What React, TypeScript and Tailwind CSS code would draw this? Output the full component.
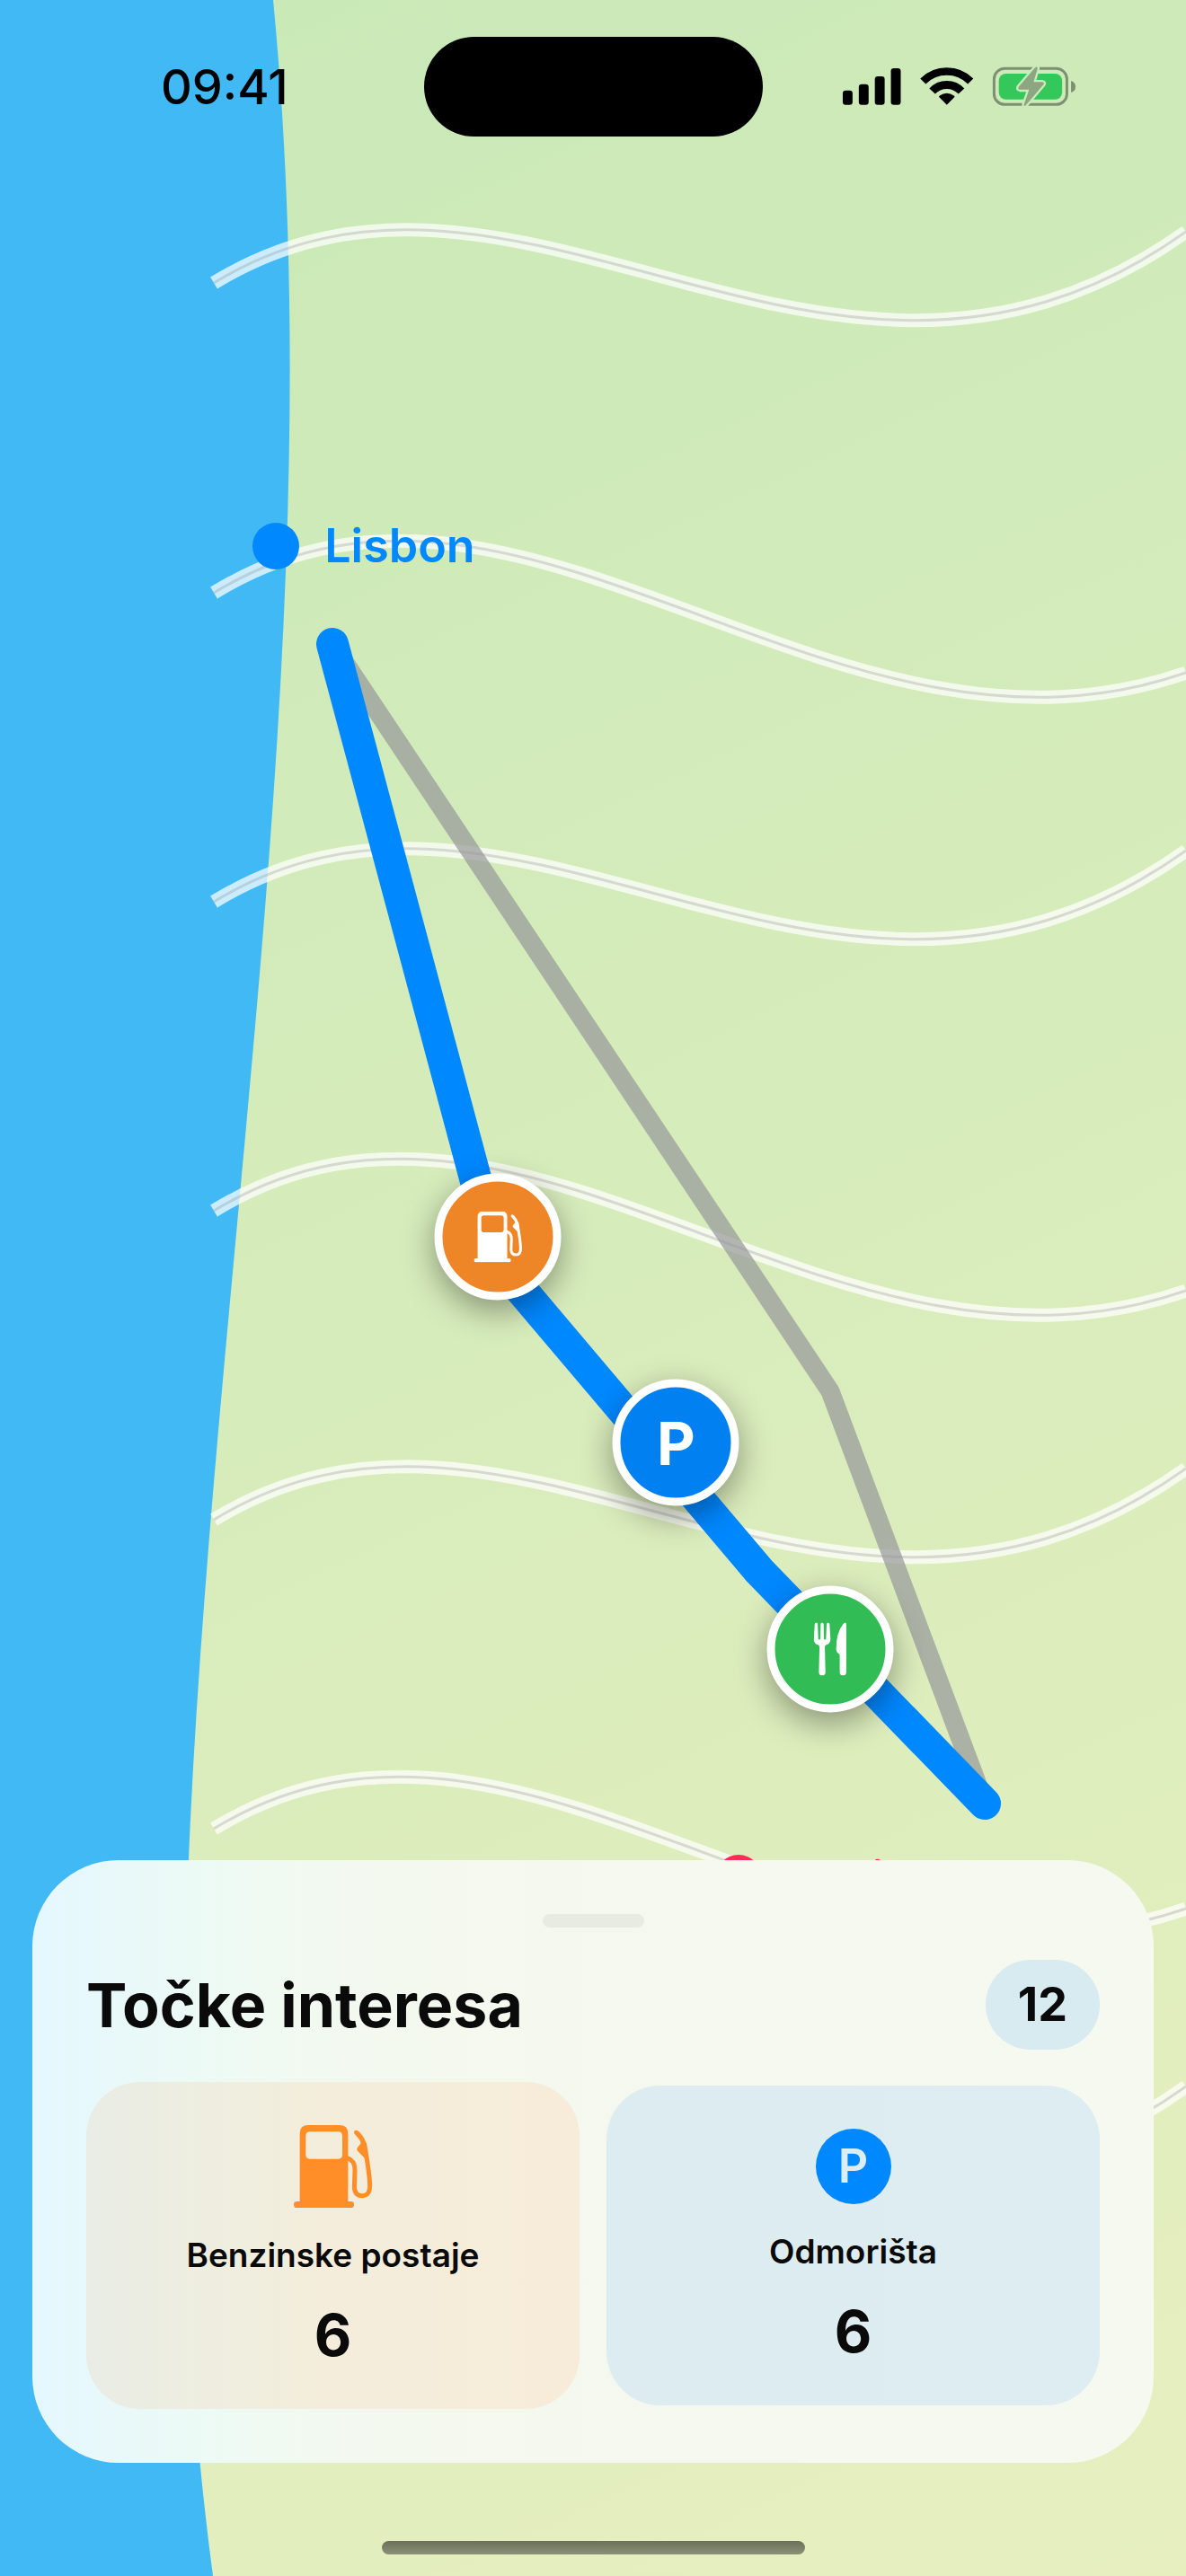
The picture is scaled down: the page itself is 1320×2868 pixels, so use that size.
import type { ReactNode } from "react";

interface Category {
  id: string;
  label: string;
  count: number;
  tint: string;
  icon: ReactNode;
}

interface CityLabelProps {
  name: string;
  position: string;
  dotColor: string;
  textColor: string;
}

interface MapPinProps {
  label: string;
  position: string;
  color: string;
  children: ReactNode;
}

const FuelIcon = ({ className }: { className: string }) => (
  <svg viewBox="27 48 264 276" className={className} aria-hidden="true">
    <path
      fill="currentColor"
      fillRule="evenodd"
      d="M75 48H180Q208 48 208 76V304H47V76Q47 48 75 48ZM81 70Q67 70 67 84V147Q67 161 81 161H175Q189 161 189 147V84Q189 70 175 70Z"
    />
    <rect x="27" y="303" width="201" height="21" rx="10" fill="currentColor" />
    <path
      fill="none"
      stroke="currentColor"
      strokeWidth="15"
      strokeLinecap="round"
      d="M206 158Q231 166 231 198L229 256Q231 284 256 284Q282 284 281 246Q279 205 263 112"
    />
    <path
      fill="currentColor"
      d="M228 75Q227 66 235 65Q240 65 245 70Q264 90 268 108L276 163H268L240 134Q235 128 240 122L251 109Q250 102 245 95Z"
    />
  </svg>
);

const CutleryIcon = ({ className }: { className: string }) => (
  <svg viewBox="0 0 110 178" className={className} fill="currentColor" aria-hidden="true">
    <path d="M3 5Q3 0 8 0Q13 0 13 5L15 54Q15 57 18 57Q22 57 22 54L23 5Q23 0 28 0Q33 0 33 5L34 54Q34 57 38 57Q41 57 41 54L43 5Q43 0 48 0Q53 0 53 5L56 56Q56 71 42 75Q37 77 37 82L39 167Q39 178 28 178Q17 178 17 167L19 82Q19 77 14 75Q0 71 0 56Z" />
    <path d="M109 4V167Q109 178 98 178Q87 178 87 167V110Q87 105 82 103Q75 99 75 90Q75 32 100 3Q107 -3 109 4Z" />
  </svg>
);

const StatusIcons = () => (
  <svg viewBox="21 42 786 136" className="h-[45px] w-[264px]" aria-label="Signal, Wi-Fi, baterija">
    <rect x="21" y="123" width="33" height="48" rx="10" />
    <rect x="75" y="102" width="33" height="69" rx="10" />
    <rect x="129" y="75" width="33" height="96" rx="10" />
    <rect x="183" y="48" width="33" height="123" rx="10" />

    <path d="M291 92A113 113 0 0 1 451 92" fill="none" stroke="black" strokeWidth="26" />
    <path d="M322 125A67 67 0 0 1 420 125" fill="none" stroke="black" strokeWidth="27" />
    <path d="M371 171L345 145Q344 142 347 140Q371 124 395 140Q398 142 397 145Z" />

    <rect x="530" y="49" width="245" height="121" rx="36" fill="none" stroke="#7c9171" strokeWidth="9" />
    <path d="M789 90Q804 95 804 110Q804 125 789 130Z" fill="#7c9171" />
    <rect x="546" y="66" width="213" height="87" rx="24" fill="#34c759" />
    <path
      d="M668 46Q677 40 676 50L663 94H692Q701 96 696 103L638 171Q629 180 631 168L648 120H617Q608 118 613 110Z"
      fill="#8ca682"
      stroke="#cbebba"
      strokeWidth="14"
      paintOrder="stroke"
      strokeLinejoin="round"
    />
  </svg>
);

const roads: string[] = [
  "M238 315C580 106 924 540 1320 258",
  "M238 660C580 451 924 886 1320 749",
  "M238 1004C580 795 924 1229 1320 947",
  "M238 1348C580 1139 924 1574 1320 1437",
  "M238 1692C580 1483 924 1917 1320 1635",
  "M238 2036C580 1827 924 2262 1320 2125",
  "M238 2380C580 2171 924 2605 1320 2323",
];

const MapCanvas = () => (
  <svg
    viewBox="0 0 1320 2868"
    preserveAspectRatio="none"
    className="absolute inset-0 h-full w-full"
    fill="none"
    aria-hidden="true"
  >
    <path d="M0 0H304C396 956 110 1912 237 2868H0Z" fill="#40b9f5" />
    {roads.map((d) => (
      <g key={d}>
        <path d={d} stroke="white" strokeOpacity="0.72" strokeWidth="15" />
        <path d={d} stroke="#8e8e93" strokeOpacity="0.3" strokeWidth="3" />
      </g>
    ))}
    {/* alternative route below the active one */}
    <path
      d="M370 717L924 1549L1096 2008"
      stroke="#95979a"
      strokeOpacity="0.7"
      strokeWidth="21"
      strokeLinecap="round"
      strokeLinejoin="round"
    />
    <path
      d="M370 717L554 1405L845 1749L1096 2008"
      stroke="#0088ff"
      strokeWidth="36"
      strokeLinecap="round"
      strokeLinejoin="round"
    />
  </svg>
);

const CityLabel = ({ name, position, dotColor, textColor }: CityLabelProps) => (
  <div className={`absolute flex -translate-y-1/2 items-center gap-7 ${position}`}>
    <span className={`size-[52px] rounded-full ${dotColor}`} />
    <span className={`text-[52px] leading-[60px] font-semibold ${textColor}`}>{name}</span>
  </div>
);

const MapPin = ({ label, position, color, children }: MapPinProps) => (
  <button
    type="button"
    aria-label={label}
    className={`absolute flex size-[141px] -translate-x-1/2 -translate-y-1/2 items-center justify-center rounded-full border-[9px] border-white text-white shadow-[0_12px_36px_rgba(0,0,0,0.38)] ${position} ${color}`}
  >
    {children}
  </button>
);

const categories: Category[] = [
  {
    id: "fuel",
    label: "Benzinske postaje",
    count: 6,
    tint: "bg-[#ff8d28]/10",
    icon: <FuelIcon className="h-[92px] w-[88px] text-[#ff8d28]" />,
  },
  {
    id: "rest",
    label: "Odmorišta",
    count: 6,
    tint: "bg-[#0088ff]/10",
    icon: (
      <span className="flex size-[84px] items-center justify-center rounded-full bg-[#0088ff] text-[52px] font-semibold text-[#ddeef2]">
        P
      </span>
    ),
  },
];

const CategoryCard = ({ category }: { category: Category }) => (
  <button
    type="button"
    className={`flex flex-col items-center rounded-[60px] pt-12 pb-11 ${category.tint}`}
  >
    {category.icon}
    <span className="mt-[30px] text-[37px] leading-[46px] font-semibold">{category.label}</span>
    <span className="mt-7 text-[64px] leading-[76px] font-bold">{category.count}</span>
  </button>
);

const App = () => {
  return (
    <main className="relative flex min-h-screen flex-col overflow-hidden bg-[linear-gradient(155deg,#c8e9b7,#e7efbf)] font-['Inter',sans-serif] text-[#0a0a0a]">
      <MapCanvas />

      <CityLabel
        name="Lisbon"
        position="left-[21.3%] top-[21.2%]"
        dotColor="bg-[#0088ff]"
        textColor="text-[#0088ff]"
      />
      <CityLabel
        name="Sevilla"
        position="left-[60.3%] top-[72.9%]"
        dotColor="bg-[#ff2d55]"
        textColor="text-[#e8365a]"
      />

      <MapPin label="Benzinska postaja" position="left-[42%] top-[48%]" color="bg-[#ee8527]">
        <FuelIcon className="h-[57px] w-[54px]" />
      </MapPin>
      <MapPin label="Odmorište" position="left-[57%] top-[56%]" color="bg-[#0080f1]">
        <span className="text-[66px] leading-none font-bold">P</span>
      </MapPin>
      <MapPin label="Restoran" position="left-[70%] top-[64%]" color="bg-[#32bc55]">
        <CutleryIcon className="h-[59px] w-[37px]" />
      </MapPin>

      <header className="relative grid grid-cols-[1fr_377px_1fr] items-center pt-[41px] text-black">
        <time className="pl-7 text-center text-[54px] leading-none font-medium">09:41</time>
        <div className="h-[111px] rounded-full bg-black" />
        <div className="flex justify-center pr-8">
          <StatusIcons />
        </div>
      </header>

      <section className="relative mx-9 mt-auto flex flex-col gap-9 rounded-[96px] bg-[linear-gradient(90deg,#e5f7ff,#ebfaf6_13%,#f2f9f0_25%,#f5f8ee_45%,#f6f9f0)] p-[60px]">
        <div className="h-[15px] w-[113px] self-center rounded-full bg-[#e8ebe2]" />
        <div className="flex items-center justify-between">
          <h1 className="text-[68px] leading-[80px] font-bold">Točke interesa</h1>
          <span className="flex h-[100px] items-center rounded-full bg-[#0088ff]/12 px-9 text-[52px] font-bold">
            12
          </span>
        </div>
        <div className="grid grid-cols-2 items-center gap-[30px]">
          {categories.map((category) => (
            <CategoryCard key={category.id} category={category} />
          ))}
        </div>
      </section>

      <div className="relative mt-[87px] mb-6 h-[15px] w-[471px] self-center rounded-full bg-linear-to-b from-[#6b705a] to-[#8c9077]" />
    </main>
  );
};

export default App;
